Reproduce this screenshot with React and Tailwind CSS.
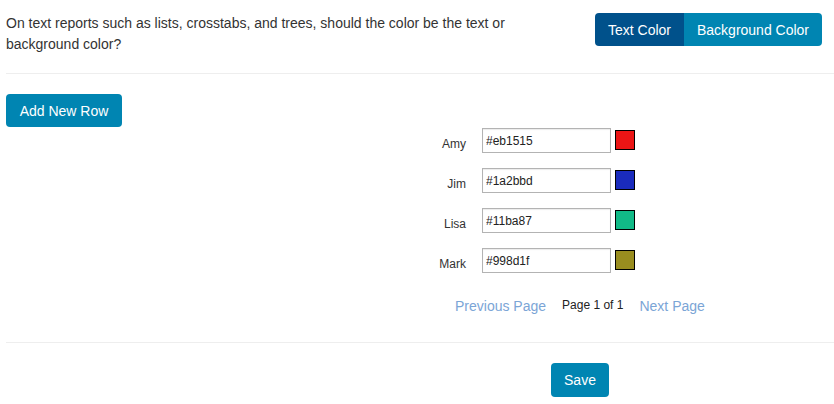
import React from "react";

const people = [
  { name: "Amy", color: "#eb1515" },
  { name: "Jim", color: "#1a2bbd" },
  { name: "Lisa", color: "#11ba87" },
  { name: "Mark", color: "#998d1f" },
];

function ColorRow({ name, color }) {
  return (
    <div className="flex items-start h-[25px]">
      <div className="w-[66px] text-right text-[12px] leading-[16px] pt-[8px] text-[#333]">{name}</div>
      <input
        type="text"
        defaultValue={color}
        className="ml-[16px] w-[129px] h-[25px] border border-[#b3b3b3] bg-white px-[3px] text-[12px] text-[#222] outline-none shadow-[inset_0_1px_1px_rgba(0,0,0,0.08)]"
      />
      <div className="ml-[4px] mt-[2px] w-[20px] h-[20px] border border-black" style={{ backgroundColor: color }} />
    </div>
  );
}

export default function App() {
  return (
    <div className="w-[834px] h-[404px] bg-white pl-[6px] font-['Liberation_Sans',Arial,sans-serif] text-[#333] overflow-hidden">
      {/* question + mode toggle */}
      <div className="flex items-start justify-between pt-[13px] pr-[12px]">
        <p className="text-[14px] leading-[21px] w-[540px]">
          On text reports such as lists, crosstabs, and trees, should the color be the text or background color?
        </p>
        <div className="flex h-[33px] rounded-[4px] overflow-hidden text-[14px] text-white">
          <button className="w-[89px] bg-[#00518b] flex items-center justify-center pt-[1px]">Text Color</button>
          <button className="w-[138px] bg-[#0085b2] flex items-center justify-center pt-[1px]">Background Color</button>
        </div>
      </div>

      <div className="mt-[18px] border-t border-[#eeeeee]" />

      <button className="mt-[20px] h-[33px] w-[116px] rounded-[4px] bg-[#0085b2] text-white text-[14px] flex items-center justify-center pt-[1px]">
        Add New Row
      </button>

      {/* color assignments */}
      <div className="mt-[1px] ml-[394px] flex flex-col gap-[15px]">
        {people.map((p) => (
          <ColorRow key={p.name} name={p.name} color={p.color} />
        ))}
      </div>

      {/* pager */}
      <div className="mt-[23px] ml-[449px] flex items-center gap-[16px] h-[20px]">
        <a className="text-[14px] leading-[20px] text-[#7ba5d6] cursor-pointer">Previous Page</a>
        <span className="text-[12px] leading-[16px] text-[#222] -mt-[3px]">Page 1 of 1</span>
        <a className="text-[14px] leading-[20px] text-[#7ba5d6] cursor-pointer">Next Page</a>
      </div>

      <div className="mt-[26px] border-t border-[#eeeeee]" />

      <button className="mt-[20px] ml-[545px] h-[34px] w-[58px] rounded-[4px] bg-[#0085b2] text-white text-[14px] flex items-center justify-center pt-[1px]">
        Save
      </button>
    </div>
  );
}
